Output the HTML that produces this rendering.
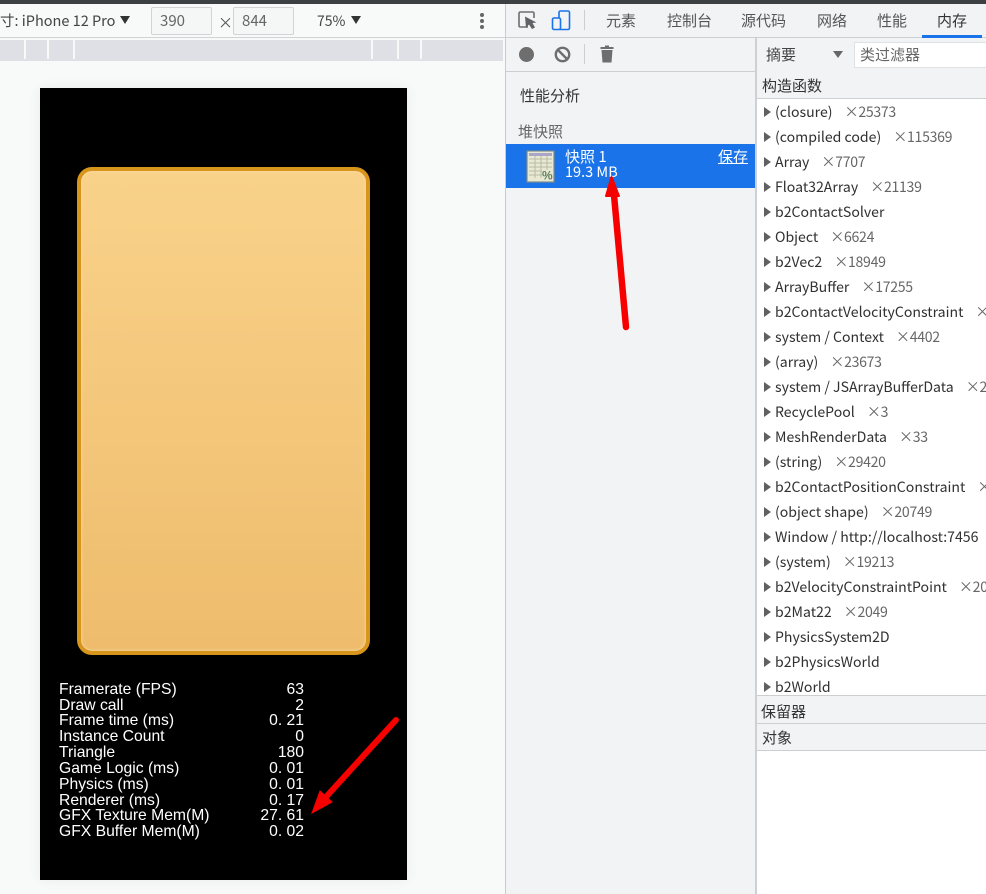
<!DOCTYPE html>
<html lang="zh"><head><meta charset="utf-8"><style>
html,body{margin:0;padding:0;width:986px;height:894px;overflow:hidden;background:#f8f9f9}
body{position:relative;font-family:"Liberation Sans","Noto Sans CJK SC",sans-serif;font-size:14px;color:#333}
.a{position:absolute;white-space:nowrap}
.t{position:absolute;white-space:nowrap;line-height:20px;font-family:"Noto Sans CJK SC","Liberation Sans",sans-serif}
.r{position:absolute;left:775px;white-space:nowrap;line-height:20px;font-family:"Noto Sans CJK SC","Liberation Sans",sans-serif;font-size:14.100px;color:#303030}
.r i{font-style:normal;color:#666;margin-left:12px;letter-spacing:-.3px}
.r:before{content:"";position:absolute;left:-11px;top:5px;border-left:7px solid #606060;border-top:5px solid transparent;border-bottom:5px solid transparent}
.s{position:absolute;left:59px;color:#fff;font:15.700px/16px "Liberation Sans",sans-serif;white-space:nowrap}
.v{position:absolute;right:682px;color:#fff;font:15.700px/16px "Liberation Sans",sans-serif;white-space:nowrap}
</style></head><body>
<div class="a" style="left:0;top:0;width:986px;height:4px;background:#3c4043"></div>
<!-- left toolbar -->
<div class="a" style="left:0;top:4px;width:505px;height:33px;background:#f8f9f9;border-bottom:1px solid #d0d3d6"></div>
<div class="t" style="left:0;top:11px;font-size:14.500px;color:#444">寸: iPhone 12 Pro</div>
<div class="a" style="left:120px;top:16px;border-left:5px solid transparent;border-right:5px solid transparent;border-top:8px solid #333"></div>
<div class="a" style="left:151px;top:7px;width:59px;height:26px;border:1px solid #d2d3d4;border-radius:2px;background:#f5f6f6"></div>
<div class="t" style="left:160px;top:11px;color:#666;font-size:15px">390</div>
<div class="t" style="left:218px;top:13px;color:#555;font-size:15px">×</div>
<div class="a" style="left:233px;top:7px;width:59px;height:26px;border:1px solid #d2d3d4;border-radius:2px;background:#f5f6f6"></div>
<div class="t" style="left:242px;top:11px;color:#666;font-size:15px">844</div>
<div class="t" style="left:317px;top:11px;color:#444;font-size:14px">75%</div>
<div class="a" style="left:351px;top:16px;border-left:5px solid transparent;border-right:5px solid transparent;border-top:8px solid #333"></div>
<div class="a" style="left:480px;top:13px;width:4px;height:4px;border-radius:2px;background:#666;box-shadow:0 6px 0 #666,0 12px 0 #666"></div>
<!-- media bar -->
<div class="a" style="left:0;top:40px;width:503px;height:21px;background:#dee0e5"></div>
<div class="a" style="left:24px;top:40px;width:2px;height:19px;background:#f8f9f9"></div>
<div class="a" style="left:47px;top:40px;width:2px;height:19px;background:#f8f9f9"></div>
<div class="a" style="left:73px;top:40px;width:2px;height:19px;background:#f8f9f9"></div>
<div class="a" style="left:371px;top:40px;width:2px;height:19px;background:#f8f9f9"></div>
<div class="a" style="left:397px;top:40px;width:2px;height:19px;background:#f8f9f9"></div>
<div class="a" style="left:420px;top:40px;width:2px;height:19px;background:#f8f9f9"></div>
<!-- device -->
<div class="a" style="left:40px;top:88px;width:367px;height:792px;background:#000;box-shadow:0 0 12px rgba(0,0,0,.06)"></div>
<div class="a" style="left:77px;top:167px;width:285px;height:480px;border:4px solid #d8951c;border-radius:15px;background:linear-gradient(#f9d28a,#eebc6c);box-shadow:inset 0 0 3px #fbe0ac"></div>
<div class="s" style="top:682px">Framerate (FPS)</div><div class="v" style="top:682px">63</div>
<div class="s" style="top:698px">Draw call</div><div class="v" style="top:698px">2</div>
<div class="s" style="top:713px">Frame time (ms)</div><div class="v" style="top:713px">0. 21</div>
<div class="s" style="top:729px">Instance Count</div><div class="v" style="top:729px">0</div>
<div class="s" style="top:745px">Triangle</div><div class="v" style="top:745px">180</div>
<div class="s" style="top:761px">Game Logic (ms)</div><div class="v" style="top:761px">0. 01</div>
<div class="s" style="top:777px">Physics (ms)</div><div class="v" style="top:777px">0. 01</div>
<div class="s" style="top:793px">Renderer (ms)</div><div class="v" style="top:793px">0. 17</div>
<div class="s" style="top:808px">GFX Texture Mem(M)</div><div class="v" style="top:808px">27. 61</div>
<div class="s" style="top:824px">GFX Buffer Mem(M)</div><div class="v" style="top:824px">0. 02</div>
<!-- devtools panel -->
<div class="a" style="left:505px;top:4px;width:481px;height:890px;background:#f2f3f5;border-left:1px solid #c8cbd0"></div>
<div class="a" style="left:506px;top:37px;width:480px;height:1px;background:#ccced2"></div>
<svg class="a" style="left:518px;top:10px" width="56" height="22" viewBox="0 0 56 22" fill="none">
<path d="M10 17H2.500Q1 17 1 15.500V3.500Q1 2 2.500 2H14.500Q16 2 16 3.500V8" stroke="#6e6e6e" stroke-width="1.600"/>
<path d="M7 6.500L8 18L11 14.500L14 19L17 17.500L14.500 13L18.500 12.500Z" fill="#5f6368"/>
<rect x="41" y="1" width="10.500" height="18.500" rx="1.500" stroke="#1a73e8" stroke-width="1.600"/>
<rect x="34.500" y="8" width="8" height="11.500" rx="1.500" fill="#f2f3f5" stroke="#1a73e8" stroke-width="1.600"/>
</svg>
<div class="a" style="left:584px;top:10px;width:1px;height:20px;background:#ccced2"></div>
<div class="t" style="left:606px;top:11px;font-size:15px;color:#555">元素</div>
<div class="t" style="left:667px;top:11px;font-size:15px;color:#555">控制台</div>
<div class="t" style="left:741px;top:11px;font-size:15px;color:#555">源代码</div>
<div class="t" style="left:817px;top:11px;font-size:15px;color:#555">网络</div>
<div class="t" style="left:877px;top:11px;font-size:15px;color:#555">性能</div>
<div class="t" style="left:937px;top:11px;font-size:15px;color:#333">内存</div>
<div class="a" style="left:922px;top:35px;width:60px;height:3px;background:#1a73e8"></div>
<!-- memory toolbar -->
<div class="a" style="left:519px;top:47px;width:15px;height:15px;border-radius:50%;background:#6e6e6e"></div>
<svg class="a" style="left:554px;top:46px" width="17" height="17" viewBox="0 0 17 17" fill="none" stroke="#6e6e6e" stroke-width="2.400"><circle cx="8.500" cy="8.500" r="6.700"/><path d="M4 4L13 13"/></svg>
<div class="a" style="left:584px;top:44px;width:1px;height:20px;background:#ccced2"></div>
<svg class="a" style="left:600px;top:45px" width="14" height="18" viewBox="0 0 14 18" fill="#6e6e6e"><path d="M5 0.500H9V2H13.500V4H0.500V2H5ZM1.500 5H12.500L11.500 17.500H2.500Z"/></svg>
<div class="a" style="left:506px;top:71px;width:249px;height:1px;background:#ccced2"></div>
<div class="t" style="left:766px;top:45px;font-size:15px;color:#444">摘要</div>
<div class="a" style="left:833px;top:51px;border-left:5px solid transparent;border-right:5px solid transparent;border-top:7px solid #666"></div>
<div class="a" style="left:854px;top:42px;width:132px;height:24px;background:#fff;border:1px solid #e0e1e3;border-right:0"></div>
<div class="t" style="left:860px;top:45px;font-size:15px;color:#666">类过滤器</div>
<!-- left pane -->
<div class="t" style="left:520px;top:86px;font-size:15px;color:#333">性能分析</div>
<div class="t" style="left:518px;top:122px;font-size:15px;color:#666">堆快照</div>
<div class="a" style="left:506px;top:144px;width:249px;height:44px;background:#1a73e8"></div>
<svg class="a" style="left:526px;top:150px" width="30" height="34" viewBox="0 0 30 34">
<rect x="1" y="1" width="27" height="31" fill="#e9e8d2" stroke="#7f8a8c" stroke-width="1.200"/>
<rect x="3" y="3" width="23" height="3" fill="#a9a6c9"/>
<path d="M3 9H26M3 13H26M3 17H26M3 21H26M3 25H26M9 6V28M15 6V28M21 6V28" stroke="#b9bba6" stroke-width="1"/>
<rect x="16" y="20" width="11" height="10" fill="#e9e8d2"/>
<text x="16" y="29.500" font-size="12" font-weight="bold" fill="#5d8060" font-family="Liberation Sans">%</text>
</svg>
<div class="t" style="left:565px;top:148px;font-size:15px;line-height:18px;color:#fff">快照 1</div>
<div class="t" style="left:565px;top:163px;font-size:14.500px;line-height:18px;color:#fff">19.3 MB</div>
<div class="t" style="left:718px;top:148px;font-size:15px;line-height:18px;color:#fff;text-decoration:underline">保存</div>
<!-- right pane -->
<div class="a" style="left:756px;top:72px;width:230px;height:26px;background:#f2f3f5;border-bottom:1px solid #ccced2"></div>
<div class="t" style="left:762px;top:76px;font-size:15px;color:#333">构造函数</div>
<div class="a" style="left:756px;top:99px;width:230px;height:597px;background:#fff;overflow:hidden"></div>
<div class="r" style="top:102px">(closure)<i>×25373</i></div>
<div class="r" style="top:127px">(compiled code)<i>×115369</i></div>
<div class="r" style="top:152px">Array<i>×7707</i></div>
<div class="r" style="top:177px">Float32Array<i>×21139</i></div>
<div class="r" style="top:202px">b2ContactSolver</div>
<div class="r" style="top:227px">Object<i>×6624</i></div>
<div class="r" style="top:252px">b2Vec2<i>×18949</i></div>
<div class="r" style="top:277px">ArrayBuffer<i>×17255</i></div>
<div class="r" style="top:302px">b2ContactVelocityConstraint<i>×</i></div>
<div class="r" style="top:327px">system / Context<i>×4402</i></div>
<div class="r" style="top:352px">(array)<i>×23673</i></div>
<div class="r" style="top:377px">system / JSArrayBufferData<i>×2</i></div>
<div class="r" style="top:402px">RecyclePool<i>×3</i></div>
<div class="r" style="top:427px">MeshRenderData<i>×33</i></div>
<div class="r" style="top:452px">(string)<i>×29420</i></div>
<div class="r" style="top:477px">b2ContactPositionConstraint<i>×</i></div>
<div class="r" style="top:502px">(object shape)<i>×20749</i></div>
<div class="r" style="top:527px">Window / http://localhost:7456</div>
<div class="r" style="top:552px">(system)<i>×19213</i></div>
<div class="r" style="top:577px">b2VelocityConstraintPoint<i>×204</i></div>
<div class="r" style="top:602px">b2Mat22<i>×2049</i></div>
<div class="r" style="top:627px">PhysicsSystem2D</div>
<div class="r" style="top:652px">b2PhysicsWorld</div>
<div class="r" style="top:677px">b2World</div>
<div class="a" style="left:756px;top:695px;width:230px;height:27px;background:#f2f3f5;border-top:1px solid #ccced2;border-bottom:1px solid #ccced2"></div>
<div class="t" style="left:761px;top:702px;font-size:15px;color:#333">保留器</div>
<div class="a" style="left:756px;top:724px;width:230px;height:26px;background:#f2f3f5;border-bottom:1px solid #ccced2"></div>
<div class="t" style="left:762px;top:728px;font-size:15px;color:#333">对象</div>
<div class="a" style="left:756px;top:751px;width:230px;height:143px;background:#fff"></div>
<div class="a" style="left:755px;top:38px;width:2px;height:856px;background:#cdd0d4"></div>
<!-- red arrows -->
<svg class="a" style="left:0;top:0;pointer-events:none" width="986" height="894" fill="none">
<path d="M626 327L614 195" stroke="#f60000" stroke-width="6.500" stroke-linecap="round"/>
<path d="M611.500 177L619 196L606 196Z" fill="#f60000" stroke="#f60000" stroke-width="2" stroke-linejoin="round"/>
<path d="M396 720L325 798" stroke="#f60000" stroke-width="6" stroke-linecap="round"/>
<path d="M312 813L320 791L332 802Z" fill="#f60000" stroke="#f60000" stroke-width="1"/>
</svg>
</body></html>
